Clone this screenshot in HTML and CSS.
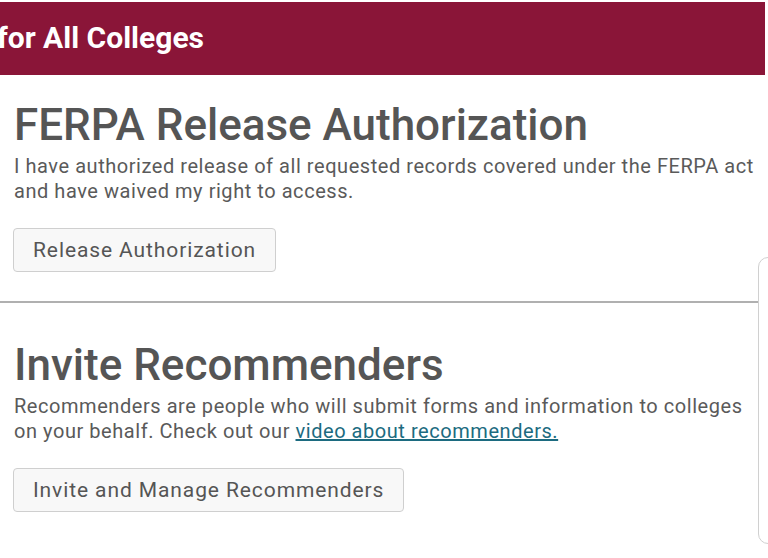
FILE: index.html
```html
<!DOCTYPE html>
<html>
<head>
<meta charset="utf-8">
<link rel="stylesheet" href="styles.css">
</head>
<body>
<div class="page">
  <header class="banner"><span class="banner-title">for All Colleges</span></header>
  <section class="block block-ferpa">
    <h1 class="block-title">FERPA Release Authorization</h1>
    <p class="block-text">I have authorized release of all requested records covered under the FERPA act and have waived my right to access.</p>
    <button class="btn btn-release">Release Authorization</button>
  </section>
  <hr class="divider">
  <section class="block block-invite">
    <h1 class="block-title">Invite Recommenders</h1>
    <p class="block-text">Recommenders are people who will submit forms and information to colleges on your behalf. Check out our <a class="link" href="#">video about recommenders.</a></p>
    <button class="btn btn-invite">Invite and Manage Recommenders</button>
  </section>
  <div class="side-panel"></div>
</div>
</body>
</html>
```
FILE: styles.css
```css
html, body {
  margin: 0;
  padding: 0;
  background: #ffffff;
}
.page {
  position: relative;
  width: 768px;
  height: 558px;
  overflow: hidden;
  font-family: Roboto, "Liberation Sans", sans-serif;
  color: #555555;
}
.banner {
  margin-top: 2px;
  width: 765px;
  height: 73px;
  background: #8a1538;
  display: flex;
  align-items: center;
}
.banner-title {
  margin-left: -3px;
  color: #ffffff;
  font-weight: 700;
  font-size: 30px;
  padding-bottom: 2px;
}
.block {
  padding-left: 14px;
}
.block-ferpa {
  padding-top: 24px;
  height: 226px;
  box-sizing: border-box;
}
.block-title {
  margin: 0;
  font-size: 44px;
  font-weight: 500;
  color: #555555;
  line-height: 52px;
}
.block-text {
  margin: 3px 0 0 0;
  font-size: 20px;
  letter-spacing: 0.55px;
  line-height: 25px;
  color: #5a5a5a;
  width: 752px;
}
.btn {
  margin-top: 24px;
  margin-left: -1px;
  height: 44px;
  padding: 0 19px;
  font-family: Roboto, "Liberation Sans", sans-serif;
  font-size: 21px;
  letter-spacing: 0.9px;
  color: #555555;
  background: #f8f8f8;
  border: 1px solid #cfcfcf;
  border-radius: 4px;
}
.divider {
  margin: 0;
  width: 758px;
  border: 0;
  border-top: 2px solid #b0b0b0;
}
.block-invite {
  padding-top: 36px;
}
.link {
  color: #1c6b80;
  text-decoration: underline;
}
.side-panel {
  position: absolute;
  left: 758px;
  top: 257px;
  width: 30px;
  height: 285px;
  border: 1px solid #d0d0d0;
  border-radius: 10px;
  background: #ffffff;
}
```
